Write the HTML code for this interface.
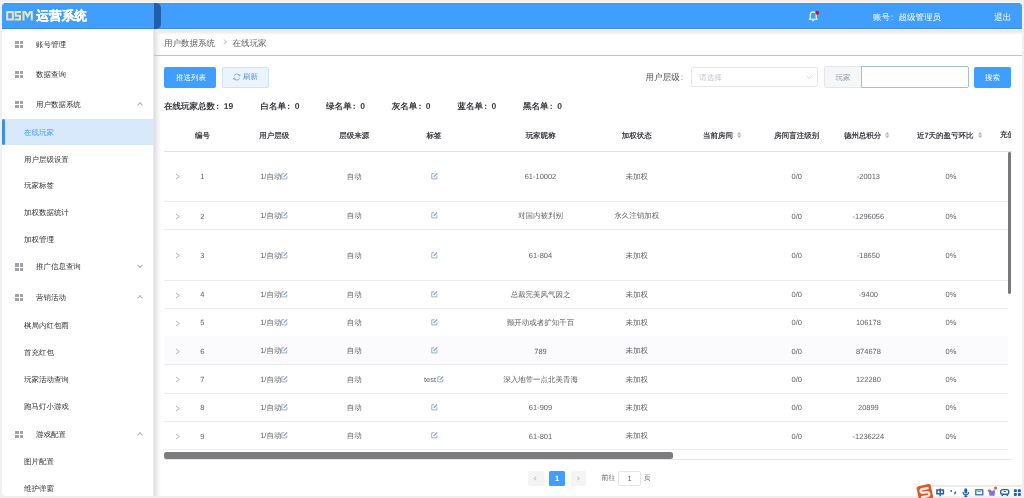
<!DOCTYPE html><html><head><meta charset="utf-8"><style>
*{margin:0;padding:0;box-sizing:border-box}
html,body{text-rendering:geometricPrecision;width:1024px;height:498px;overflow:hidden;background:#f0f0f2;font-family:"Liberation Sans",sans-serif;color:#606266}
div,span,svg{position:absolute}
#wrap{left:0;top:0;width:1024px;height:498px;will-change:transform}
.t{white-space:nowrap;line-height:10px}
.th{font-size:7.47px;font-weight:bold;color:#3c3d42}
.td{font-size:7.47px;color:#606266}
.ic{width:8px;height:8px}
.ic i{position:absolute;width:3.2px;height:3.2px;background:#a0a2a6}
.chev{width:4.2px;height:4.2px;border-left:0.9px solid #a8abb2;border-top:0.9px solid #a8abb2}
</style></head><body><div id="wrap">
<div style="left:2px;top:3px;width:1020px;height:493px;background:#fff;border-radius:4px"></div>
<div style="left:2px;top:3px;width:1020px;height:26px;background:#409eff;border-radius:4px 4px 0 0"></div>
<div style="left:154px;top:30px;width:868px;height:5px;background:linear-gradient(#e8e8ea,#ededef 40%,rgba(255,255,255,0))"></div>
<div style="left:0;top:1.6px;width:1024px;height:1.2px;background:#fbfdff"></div>
<div style="left:4px;top:3px;width:1016px;height:1px;background:#4a93e2"></div>
<div style="left:2px;top:27.8px;width:1020px;height:1.2px;background:#4189dc"></div>
<div style="left:154px;top:3px;width:7px;height:26px;background:#245ea6;border-radius:0 5px 5px 0"></div>
<svg style="left:5px;top:10px" width="29" height="12" viewBox="0 0 29 12">
<g fill="none" stroke="#e9e5b8" stroke-width="2">
<rect x="2.2" y="2.1" width="5.6" height="7.4"/>
<path d="M16 2.1H10.6V5.8H15V9.5H9.6"/>
<path d="M18.5 10.5V2.1H20.3L22.7 6.4L25.1 2.1H26.8V10.5"/>
</g></svg>
<div class="t" style="left:36.3px;top:9.4px;font-size:12.7px;line-height:14px;font-weight:bold;color:#fff;-webkit-text-stroke:0.2px #fff">运营系统</div>
<svg style="left:807px;top:8.5px" width="14" height="14" viewBox="0 0 14 14">
<path d="M2.2 10.3L3.2 9.3V6.4C3.2 4.4 4.4 2.9 6.2 2.9C8 2.9 9.2 4.4 9.2 6.4V9.3L10.2 10.3Z" fill="none" stroke="#fff" stroke-width="1.1" stroke-linejoin="round"/>
<path d="M5.2 11.6H7.2" stroke="#fff" stroke-width="1.2"/>
<circle cx="10.2" cy="3.7" r="2" fill="#d2121c"/></svg>
<div class="t" style="left:873px;top:11.5px;font-size:8.5px;color:#fff">账号<span style="position:static;margin:0 5.1px 0 1px">:</span>超级管理员</div>
<div class="t" style="left:994px;top:11.6px;font-size:8.8px;color:#fff">退出</div>
<div style="left:153px;top:29px;width:8px;height:467px;background:linear-gradient(to right,#efeff1,#dfdfe2 20%,#eeeef0 50%,rgba(255,255,255,0))"></div>
<div class="ic" style="left:15.4px;top:41.1px"><i style="left:0;top:0"></i><i style="left:4.2px;top:0"></i><i style="left:0;top:4.2px"></i><i style="left:4.2px;top:4.2px"></i></div>
<div class="t" style="left:36px;top:40px;font-size:7.47px;color:#303133">账号管理</div>
<div class="ic" style="left:15.4px;top:71.1px"><i style="left:0;top:0"></i><i style="left:4.2px;top:0"></i><i style="left:0;top:4.2px"></i><i style="left:4.2px;top:4.2px"></i></div>
<div class="t" style="left:36px;top:70px;font-size:7.47px;color:#303133">数据查询</div>
<div class="ic" style="left:15.4px;top:100.6px"><i style="left:0;top:0"></i><i style="left:4.2px;top:0"></i><i style="left:0;top:4.2px"></i><i style="left:4.2px;top:4.2px"></i></div>
<div class="t" style="left:36px;top:99.5px;font-size:7.47px;color:#303133">用户数据系统</div>
<div class="chev" style="left:137.6px;top:102.8px;transform:rotate(45deg)"></div>
<div style="left:2px;top:118.8px;width:152px;height:26.5px;background:#d9e9fc"></div>
<div style="left:2px;top:118.8px;width:3px;height:26.5px;background:#3d8eea;border-radius:1.5px"></div>
<div class="t" style="left:24px;top:127.80000000000001px;font-size:7.47px;color:#409eff">在线玩家</div>
<div class="t" style="left:24px;top:154.5px;font-size:7.47px;color:#303133">用户层级设置</div>
<div class="t" style="left:24px;top:181px;font-size:7.47px;color:#303133">玩家标签</div>
<div class="t" style="left:24px;top:207.9px;font-size:7.47px;color:#303133">加权数据统计</div>
<div class="t" style="left:24px;top:234.9px;font-size:7.47px;color:#303133">加权管理</div>
<div class="ic" style="left:15.4px;top:263.40000000000003px"><i style="left:0;top:0"></i><i style="left:4.2px;top:0"></i><i style="left:0;top:4.2px"></i><i style="left:4.2px;top:4.2px"></i></div>
<div class="t" style="left:36px;top:262.3px;font-size:7.47px;color:#303133">推广信息查询</div>
<div class="chev" style="left:137.5px;top:263.0px;transform:rotate(-135deg)"></div>
<div class="ic" style="left:15.4px;top:294.1px"><i style="left:0;top:0"></i><i style="left:4.2px;top:0"></i><i style="left:0;top:4.2px"></i><i style="left:4.2px;top:4.2px"></i></div>
<div class="t" style="left:36px;top:293px;font-size:7.47px;color:#303133">营销活动</div>
<div class="chev" style="left:137.6px;top:296.3px;transform:rotate(45deg)"></div>
<div class="t" style="left:24px;top:320.5px;font-size:7.47px;color:#303133">棋局内红包雨</div>
<div class="t" style="left:24px;top:347.5px;font-size:7.47px;color:#303133">首充红包</div>
<div class="t" style="left:24px;top:374.5px;font-size:7.47px;color:#303133">玩家活动查询</div>
<div class="t" style="left:24px;top:401.5px;font-size:7.47px;color:#303133">跑马灯小游戏</div>
<div class="ic" style="left:15.4px;top:430.6px"><i style="left:0;top:0"></i><i style="left:4.2px;top:0"></i><i style="left:0;top:4.2px"></i><i style="left:4.2px;top:4.2px"></i></div>
<div class="t" style="left:36px;top:429.5px;font-size:7.47px;color:#303133">游戏配置</div>
<div class="chev" style="left:137.6px;top:432.8px;transform:rotate(45deg)"></div>
<div class="t" style="left:24px;top:456.6px;font-size:7.47px;color:#303133">图片配置</div>
<div class="t" style="left:24px;top:483.6px;font-size:7.47px;color:#303133">维护弹窗</div>
<div class="t" style="left:164px;top:37.5px;font-size:8.53px;color:#606266">用户数据系统</div>
<div style="left:221.8px;top:40.4px;width:4.2px;height:4.2px;border-right:0.8px solid #c4c7ce;border-top:0.8px solid #c4c7ce;transform:rotate(45deg)"></div>
<div class="t" style="left:232.5px;top:37.5px;font-size:8.53px;color:#606266">在线玩家</div>
<div style="left:154px;top:55px;width:868px;height:0.9px;background:#bcc3cc"></div>
<div style="left:164px;top:67px;width:52.3px;height:20.7px;background:#409eff;border-radius:2px"></div>
<div class="t" style="left:176px;top:72.5px;font-size:7.47px;color:#fff">推送列表</div>
<div style="left:222px;top:67px;width:46.8px;height:20.7px;background:#ebf4fe;border:0.7px solid #d3e2f2;border-radius:2px"></div>
<svg style="left:232px;top:72px" width="10" height="10" viewBox="0 0 10 10"><path d="M7.6 3.6A3 3 0 0 0 2.2 3.9 M2 6.3A3 3 0 0 0 7.5 6.2" fill="none" stroke="#6b8fb8" stroke-width="0.75"/><path d="M7.9 2.2V3.9H6.3 M1.8 7.8V6.1H3.4" fill="none" stroke="#6b8fb8" stroke-width="0.7"/></svg>
<div class="t" style="left:243px;top:72.2px;font-size:7.47px;color:#4f91dc">刷新</div>
<div class="t" style="left:645.6px;top:71.8px;font-size:8.53px;color:#4a4c50">用户层级<span style="position:static;margin-left:1px">:</span></div>
<div style="left:690.5px;top:66.8px;width:127.8px;height:20.5px;background:#fff;border:0.7px solid #e8e8eb;border-radius:2px"></div>
<div class="t" style="left:699.3px;top:72.5px;font-size:7.47px;color:#c0c4cc">请选择</div>
<svg style="left:805.5px;top:75.2px" width="7" height="5" viewBox="0 0 7 5"><path d="M0.6 0.8L3.4 3.5L6.2 0.8" fill="none" stroke="#c4c6cc" stroke-width="0.7"/></svg>
<div style="left:824.2px;top:66.3px;width:40px;height:21.3px;background:#f5f6f9;border:0.7px solid #e6e6ea;border-radius:2px 0 0 2px"></div>
<div class="t" style="left:835.5px;top:72.5px;font-size:7.47px;color:#909399">玩家</div>
<div style="left:861px;top:66.3px;width:107.5px;height:21.3px;background:#fff;border:0.8px solid #a2bfd8;border-radius:0 2px 2px 0"></div>
<div style="left:974.2px;top:66.7px;width:36.7px;height:20.9px;background:#409eff;border-radius:2px"></div>
<div class="t" style="left:985px;top:72.5px;font-size:7.47px;color:#fff">搜索</div>
<div class="t" style="left:164px;top:100.6px;font-size:8.53px;font-weight:bold;color:#3a3b3f">在线玩家总数<span style="position:static;margin:0 4.6px 0 1.2px">:</span>19</div>
<div class="t" style="left:260.5px;top:100.6px;font-size:8.53px;font-weight:bold;color:#3a3b3f">白名单<span style="position:static;margin:0 4.6px 0 1.2px">:</span>0</div>
<div class="t" style="left:326.1px;top:100.6px;font-size:8.53px;font-weight:bold;color:#3a3b3f">绿名单<span style="position:static;margin:0 4.6px 0 1.2px">:</span>0</div>
<div class="t" style="left:391.7px;top:100.6px;font-size:8.53px;font-weight:bold;color:#3a3b3f">灰名单<span style="position:static;margin:0 4.6px 0 1.2px">:</span>0</div>
<div class="t" style="left:457.4px;top:100.6px;font-size:8.53px;font-weight:bold;color:#3a3b3f">蓝名单<span style="position:static;margin:0 4.6px 0 1.2px">:</span>0</div>
<div class="t" style="left:523px;top:100.6px;font-size:8.53px;font-weight:bold;color:#3a3b3f">黑名单<span style="position:static;margin:0 4.6px 0 1.2px">:</span>0</div>
<div class="t th" style="left:202.5px;top:130.5px;transform:translateX(-50%)">编号</div>
<div class="t th" style="left:274.2px;top:130.5px;transform:translateX(-50%)">用户层级</div>
<div class="t th" style="left:354.2px;top:130.5px;transform:translateX(-50%)">层级来源</div>
<div class="t th" style="left:434px;top:130.5px;transform:translateX(-50%)">标签</div>
<div class="t th" style="left:540.8px;top:130.5px;transform:translateX(-50%)">玩家昵称</div>
<div class="t th" style="left:636.7px;top:130.5px;transform:translateX(-50%)">加权状态</div>
<div class="t th" style="left:718px;top:130.5px;transform:translateX(-50%)">当前房间</div>
<div class="t th" style="left:796.7px;top:130.5px;transform:translateX(-50%)">房间盲注级别</div>
<div class="t th" style="left:862.6px;top:130.5px;transform:translateX(-50%)">德州总积分</div>
<div class="t th" style="left:945.2px;top:130.5px;transform:translateX(-50%)">近7天的盈亏环比</div>
<div style="left:999px;top:128px;width:12.3px;height:14px;overflow:hidden"><div class="t th" style="left:1px;top:2.2px">充值</div></div>
<svg style="left:737.3px;top:131.8px" width="4.4" height="6" viewBox="0 0 4.4 6"><path d="M2.2 0L4.4 2.6H0Z M2.2 6L4.4 3.4H0Z" fill="#b2b4b8"/></svg>
<svg style="left:885.4px;top:131.8px" width="4.4" height="6" viewBox="0 0 4.4 6"><path d="M2.2 0L4.4 2.6H0Z M2.2 6L4.4 3.4H0Z" fill="#b2b4b8"/></svg>
<svg style="left:977.6px;top:131.8px" width="4.4" height="6" viewBox="0 0 4.4 6"><path d="M2.2 0L4.4 2.6H0Z M2.2 6L4.4 3.4H0Z" fill="#b2b4b8"/></svg>
<div style="left:164px;top:150.6px;width:848px;height:0.9px;background:#e2e2e4"></div>
<div style="left:1012px;top:135px;width:10px;height:340px;background:#fff"></div>
<svg style="left:175.2px;top:173.29999999999998px" width="6" height="7" viewBox="0 0 6 7"><path d="M1 1L4.3 3.5L1 6" fill="none" stroke="#9a9da2" stroke-width="0.8"/></svg>
<div class="t td" style="left:202.4px;top:172.2px;transform:translateX(-50%)">1</div>
<div class="t td" style="left:260.2px;top:171.7px">1/自动</div>
<svg style="left:281.4px;top:172.5px" width="7" height="7" viewBox="0 0 7 7"><path d="M3.4 0.75H0.75V5.9H5.9V3.3" fill="none" stroke="#8fa8c8" stroke-width="0.9"/><path d="M2.7 3.9L6.2 0.5" stroke="#7d9dd2" stroke-width="1.1"/></svg>
<div class="t td" style="left:354.2px;top:171.7px;transform:translateX(-50%)">自动</div>
<svg style="left:430.5px;top:172.5px" width="7" height="7" viewBox="0 0 7 7"><path d="M3.4 0.75H0.75V5.9H5.9V3.3" fill="none" stroke="#8fa8c8" stroke-width="0.9"/><path d="M2.7 3.9L6.2 0.5" stroke="#7d9dd2" stroke-width="1.1"/></svg>
<div class="t td" style="left:540.5px;top:172.2px;transform:translateX(-50%)">61-10002</div>
<div class="t td" style="left:636.7px;top:171.7px;transform:translateX(-50%)">未加权</div>
<div class="t td" style="left:796.7px;top:172.2px;transform:translateX(-50%)">0/0</div>
<div class="t td" style="left:868.4px;top:172.2px;transform:translateX(-50%)">-20013</div>
<div class="t td" style="left:951px;top:172.2px;transform:translateX(-50%)">0%</div>
<div style="left:164px;top:201.2px;width:844px;height:0.8px;background:#ececee"></div>
<svg style="left:175.2px;top:213.0px" width="6" height="7" viewBox="0 0 6 7"><path d="M1 1L4.3 3.5L1 6" fill="none" stroke="#9a9da2" stroke-width="0.8"/></svg>
<div class="t td" style="left:202.4px;top:211.9px;transform:translateX(-50%)">2</div>
<div class="t td" style="left:260.2px;top:211.4px">1/自动</div>
<svg style="left:281.4px;top:212.20000000000002px" width="7" height="7" viewBox="0 0 7 7"><path d="M3.4 0.75H0.75V5.9H5.9V3.3" fill="none" stroke="#8fa8c8" stroke-width="0.9"/><path d="M2.7 3.9L6.2 0.5" stroke="#7d9dd2" stroke-width="1.1"/></svg>
<div class="t td" style="left:354.2px;top:211.4px;transform:translateX(-50%)">自动</div>
<svg style="left:430.5px;top:212.20000000000002px" width="7" height="7" viewBox="0 0 7 7"><path d="M3.4 0.75H0.75V5.9H5.9V3.3" fill="none" stroke="#8fa8c8" stroke-width="0.9"/><path d="M2.7 3.9L6.2 0.5" stroke="#7d9dd2" stroke-width="1.1"/></svg>
<div class="t td" style="left:540.5px;top:211.4px;transform:translateX(-50%)">对国内被判别</div>
<div class="t td" style="left:636.7px;top:211.4px;transform:translateX(-50%)">永久注销加权</div>
<div class="t td" style="left:796.7px;top:211.9px;transform:translateX(-50%)">0/0</div>
<div class="t td" style="left:868.4px;top:211.9px;transform:translateX(-50%)">-1296056</div>
<div class="t td" style="left:951px;top:211.9px;transform:translateX(-50%)">0%</div>
<div style="left:164px;top:229.4px;width:844px;height:0.8px;background:#ececee"></div>
<svg style="left:175.2px;top:252.4px" width="6" height="7" viewBox="0 0 6 7"><path d="M1 1L4.3 3.5L1 6" fill="none" stroke="#9a9da2" stroke-width="0.8"/></svg>
<div class="t td" style="left:202.4px;top:251.3px;transform:translateX(-50%)">3</div>
<div class="t td" style="left:260.2px;top:250.8px">1/自动</div>
<svg style="left:281.4px;top:251.60000000000002px" width="7" height="7" viewBox="0 0 7 7"><path d="M3.4 0.75H0.75V5.9H5.9V3.3" fill="none" stroke="#8fa8c8" stroke-width="0.9"/><path d="M2.7 3.9L6.2 0.5" stroke="#7d9dd2" stroke-width="1.1"/></svg>
<div class="t td" style="left:354.2px;top:250.8px;transform:translateX(-50%)">自动</div>
<svg style="left:430.5px;top:251.60000000000002px" width="7" height="7" viewBox="0 0 7 7"><path d="M3.4 0.75H0.75V5.9H5.9V3.3" fill="none" stroke="#8fa8c8" stroke-width="0.9"/><path d="M2.7 3.9L6.2 0.5" stroke="#7d9dd2" stroke-width="1.1"/></svg>
<div class="t td" style="left:540.5px;top:251.3px;transform:translateX(-50%)">61-804</div>
<div class="t td" style="left:636.7px;top:250.8px;transform:translateX(-50%)">未加权</div>
<div class="t td" style="left:796.7px;top:251.3px;transform:translateX(-50%)">0/0</div>
<div class="t td" style="left:868.4px;top:251.3px;transform:translateX(-50%)">-18650</div>
<div class="t td" style="left:951px;top:251.3px;transform:translateX(-50%)">0%</div>
<div style="left:164px;top:280.3px;width:844px;height:0.8px;background:#ececee"></div>
<svg style="left:175.2px;top:291.5px" width="6" height="7" viewBox="0 0 6 7"><path d="M1 1L4.3 3.5L1 6" fill="none" stroke="#9a9da2" stroke-width="0.8"/></svg>
<div class="t td" style="left:202.4px;top:290.4px;transform:translateX(-50%)">4</div>
<div class="t td" style="left:260.2px;top:289.9px">1/自动</div>
<svg style="left:281.4px;top:290.7px" width="7" height="7" viewBox="0 0 7 7"><path d="M3.4 0.75H0.75V5.9H5.9V3.3" fill="none" stroke="#8fa8c8" stroke-width="0.9"/><path d="M2.7 3.9L6.2 0.5" stroke="#7d9dd2" stroke-width="1.1"/></svg>
<div class="t td" style="left:354.2px;top:289.9px;transform:translateX(-50%)">自动</div>
<svg style="left:430.5px;top:290.7px" width="7" height="7" viewBox="0 0 7 7"><path d="M3.4 0.75H0.75V5.9H5.9V3.3" fill="none" stroke="#8fa8c8" stroke-width="0.9"/><path d="M2.7 3.9L6.2 0.5" stroke="#7d9dd2" stroke-width="1.1"/></svg>
<div class="t td" style="left:540.5px;top:289.9px;transform:translateX(-50%)">总裁完美风气因之</div>
<div class="t td" style="left:636.7px;top:289.9px;transform:translateX(-50%)">未加权</div>
<div class="t td" style="left:796.7px;top:290.4px;transform:translateX(-50%)">0/0</div>
<div class="t td" style="left:868.4px;top:290.4px;transform:translateX(-50%)">-9400</div>
<div class="t td" style="left:951px;top:290.4px;transform:translateX(-50%)">0%</div>
<div style="left:164px;top:308.0px;width:844px;height:0.8px;background:#ececee"></div>
<svg style="left:175.2px;top:319.5px" width="6" height="7" viewBox="0 0 6 7"><path d="M1 1L4.3 3.5L1 6" fill="none" stroke="#9a9da2" stroke-width="0.8"/></svg>
<div class="t td" style="left:202.4px;top:318.4px;transform:translateX(-50%)">5</div>
<div class="t td" style="left:260.2px;top:317.9px">1/自动</div>
<svg style="left:281.4px;top:318.7px" width="7" height="7" viewBox="0 0 7 7"><path d="M3.4 0.75H0.75V5.9H5.9V3.3" fill="none" stroke="#8fa8c8" stroke-width="0.9"/><path d="M2.7 3.9L6.2 0.5" stroke="#7d9dd2" stroke-width="1.1"/></svg>
<div class="t td" style="left:354.2px;top:317.9px;transform:translateX(-50%)">自动</div>
<svg style="left:430.5px;top:318.7px" width="7" height="7" viewBox="0 0 7 7"><path d="M3.4 0.75H0.75V5.9H5.9V3.3" fill="none" stroke="#8fa8c8" stroke-width="0.9"/><path d="M2.7 3.9L6.2 0.5" stroke="#7d9dd2" stroke-width="1.1"/></svg>
<div class="t td" style="left:540.5px;top:317.9px;transform:translateX(-50%)">颤开动或者扩知千百</div>
<div class="t td" style="left:636.7px;top:317.9px;transform:translateX(-50%)">未加权</div>
<div class="t td" style="left:796.7px;top:318.4px;transform:translateX(-50%)">0/0</div>
<div class="t td" style="left:868.4px;top:318.4px;transform:translateX(-50%)">106178</div>
<div class="t td" style="left:951px;top:318.4px;transform:translateX(-50%)">0%</div>
<div style="left:164px;top:336.0px;width:844px;height:0.8px;background:#ececee"></div>
<div style="left:164px;top:336.4px;width:844px;height:28.200000000000045px;background:#fbfafd"></div>
<svg style="left:175.2px;top:347.70000000000005px" width="6" height="7" viewBox="0 0 6 7"><path d="M1 1L4.3 3.5L1 6" fill="none" stroke="#9a9da2" stroke-width="0.8"/></svg>
<div class="t td" style="left:202.4px;top:346.6px;transform:translateX(-50%)">6</div>
<div class="t td" style="left:260.2px;top:346.1px">1/自动</div>
<svg style="left:281.4px;top:346.90000000000003px" width="7" height="7" viewBox="0 0 7 7"><path d="M3.4 0.75H0.75V5.9H5.9V3.3" fill="none" stroke="#8fa8c8" stroke-width="0.9"/><path d="M2.7 3.9L6.2 0.5" stroke="#7d9dd2" stroke-width="1.1"/></svg>
<div class="t td" style="left:354.2px;top:346.1px;transform:translateX(-50%)">自动</div>
<svg style="left:430.5px;top:346.90000000000003px" width="7" height="7" viewBox="0 0 7 7"><path d="M3.4 0.75H0.75V5.9H5.9V3.3" fill="none" stroke="#8fa8c8" stroke-width="0.9"/><path d="M2.7 3.9L6.2 0.5" stroke="#7d9dd2" stroke-width="1.1"/></svg>
<div class="t td" style="left:540.5px;top:346.6px;transform:translateX(-50%)">789</div>
<div class="t td" style="left:636.7px;top:346.1px;transform:translateX(-50%)">未加权</div>
<div class="t td" style="left:796.7px;top:346.6px;transform:translateX(-50%)">0/0</div>
<div class="t td" style="left:868.4px;top:346.6px;transform:translateX(-50%)">874678</div>
<div class="t td" style="left:951px;top:346.6px;transform:translateX(-50%)">0%</div>
<div style="left:164px;top:364.20000000000005px;width:844px;height:0.8px;background:#ececee"></div>
<svg style="left:175.2px;top:376.3px" width="6" height="7" viewBox="0 0 6 7"><path d="M1 1L4.3 3.5L1 6" fill="none" stroke="#9a9da2" stroke-width="0.8"/></svg>
<div class="t td" style="left:202.4px;top:375.2px;transform:translateX(-50%)">7</div>
<div class="t td" style="left:260.2px;top:374.7px">1/自动</div>
<svg style="left:281.4px;top:375.5px" width="7" height="7" viewBox="0 0 7 7"><path d="M3.4 0.75H0.75V5.9H5.9V3.3" fill="none" stroke="#8fa8c8" stroke-width="0.9"/><path d="M2.7 3.9L6.2 0.5" stroke="#7d9dd2" stroke-width="1.1"/></svg>
<div class="t td" style="left:354.2px;top:374.7px;transform:translateX(-50%)">自动</div>
<div class="t td" style="left:424px;top:374.7px">test</div>
<svg style="left:436.9px;top:375.5px" width="7" height="7" viewBox="0 0 7 7"><path d="M3.4 0.75H0.75V5.9H5.9V3.3" fill="none" stroke="#8fa8c8" stroke-width="0.9"/><path d="M2.7 3.9L6.2 0.5" stroke="#7d9dd2" stroke-width="1.1"/></svg>
<div class="t td" style="left:540.5px;top:374.7px;transform:translateX(-50%)">深入地带一点北美青海</div>
<div class="t td" style="left:636.7px;top:374.7px;transform:translateX(-50%)">未加权</div>
<div class="t td" style="left:796.7px;top:375.2px;transform:translateX(-50%)">0/0</div>
<div class="t td" style="left:868.4px;top:375.2px;transform:translateX(-50%)">122280</div>
<div class="t td" style="left:951px;top:375.2px;transform:translateX(-50%)">0%</div>
<div style="left:164px;top:392.8px;width:844px;height:0.8px;background:#ececee"></div>
<svg style="left:175.2px;top:404.5px" width="6" height="7" viewBox="0 0 6 7"><path d="M1 1L4.3 3.5L1 6" fill="none" stroke="#9a9da2" stroke-width="0.8"/></svg>
<div class="t td" style="left:202.4px;top:403.4px;transform:translateX(-50%)">8</div>
<div class="t td" style="left:260.2px;top:402.9px">1/自动</div>
<svg style="left:281.4px;top:403.7px" width="7" height="7" viewBox="0 0 7 7"><path d="M3.4 0.75H0.75V5.9H5.9V3.3" fill="none" stroke="#8fa8c8" stroke-width="0.9"/><path d="M2.7 3.9L6.2 0.5" stroke="#7d9dd2" stroke-width="1.1"/></svg>
<div class="t td" style="left:354.2px;top:402.9px;transform:translateX(-50%)">自动</div>
<svg style="left:430.5px;top:403.7px" width="7" height="7" viewBox="0 0 7 7"><path d="M3.4 0.75H0.75V5.9H5.9V3.3" fill="none" stroke="#8fa8c8" stroke-width="0.9"/><path d="M2.7 3.9L6.2 0.5" stroke="#7d9dd2" stroke-width="1.1"/></svg>
<div class="t td" style="left:540.5px;top:403.4px;transform:translateX(-50%)">61-909</div>
<div class="t td" style="left:636.7px;top:402.9px;transform:translateX(-50%)">未加权</div>
<div class="t td" style="left:796.7px;top:403.4px;transform:translateX(-50%)">0/0</div>
<div class="t td" style="left:868.4px;top:403.4px;transform:translateX(-50%)">20899</div>
<div class="t td" style="left:951px;top:403.4px;transform:translateX(-50%)">0%</div>
<div style="left:164px;top:421.0px;width:844px;height:0.8px;background:#ececee"></div>
<svg style="left:175.2px;top:432.6px" width="6" height="7" viewBox="0 0 6 7"><path d="M1 1L4.3 3.5L1 6" fill="none" stroke="#9a9da2" stroke-width="0.8"/></svg>
<div class="t td" style="left:202.4px;top:431.5px;transform:translateX(-50%)">9</div>
<div class="t td" style="left:260.2px;top:431.0px">1/自动</div>
<svg style="left:281.4px;top:431.8px" width="7" height="7" viewBox="0 0 7 7"><path d="M3.4 0.75H0.75V5.9H5.9V3.3" fill="none" stroke="#8fa8c8" stroke-width="0.9"/><path d="M2.7 3.9L6.2 0.5" stroke="#7d9dd2" stroke-width="1.1"/></svg>
<div class="t td" style="left:354.2px;top:431.0px;transform:translateX(-50%)">自动</div>
<svg style="left:430.5px;top:431.8px" width="7" height="7" viewBox="0 0 7 7"><path d="M3.4 0.75H0.75V5.9H5.9V3.3" fill="none" stroke="#8fa8c8" stroke-width="0.9"/><path d="M2.7 3.9L6.2 0.5" stroke="#7d9dd2" stroke-width="1.1"/></svg>
<div class="t td" style="left:540.5px;top:431.5px;transform:translateX(-50%)">61-801</div>
<div class="t td" style="left:636.7px;top:431.0px;transform:translateX(-50%)">未加权</div>
<div class="t td" style="left:796.7px;top:431.5px;transform:translateX(-50%)">0/0</div>
<div class="t td" style="left:868.4px;top:431.5px;transform:translateX(-50%)">-1236224</div>
<div class="t td" style="left:951px;top:431.5px;transform:translateX(-50%)">0%</div>
<div style="left:164px;top:448.90000000000003px;width:844px;height:0.8px;background:#ececee"></div>
<div style="left:1008.2px;top:152.4px;width:2.8px;height:142px;background:#79797b;border-radius:1.4px"></div>
<div style="left:164px;top:452px;width:509px;height:7.2px;background:#7d7d7f;border-radius:2.5px"></div>
<div style="left:164px;top:459.2px;width:847px;height:0.8px;background:#e4e4e6"></div>
<div style="left:528px;top:471px;width:15.5px;height:15px;background:#f4f4f5;border-radius:1.5px"></div>
<div style="left:534px;top:477px;width:3.4px;height:3.4px;border-left:0.8px solid #c0c4cc;border-bottom:0.8px solid #c0c4cc;transform:rotate(45deg)"></div>
<div style="left:549px;top:471px;width:16px;height:15px;background:#409eff;border-radius:1.5px"></div>
<div class="t" style="left:557px;top:473.5px;font-size:7.47px;font-weight:bold;color:#fff;transform:translateX(-50%)">1</div>
<div style="left:570.7px;top:471px;width:15.3px;height:15px;background:#f4f4f5;border-radius:1.5px"></div>
<div style="left:576.3px;top:477px;width:3.4px;height:3.4px;border-right:0.8px solid #c0c4cc;border-top:0.8px solid #c0c4cc;transform:rotate(45deg)"></div>
<div class="t" style="left:601.4px;top:473.7px;font-size:7px;color:#606266">前往</div>
<div style="left:617.8px;top:471px;width:23.2px;height:15px;background:#fff;border:0.7px solid #e4e7ed;border-radius:2px"></div>
<div class="t" style="left:629.5px;top:473.5px;font-size:7.47px;color:#606266;transform:translateX(-50%)">1</div>
<div class="t" style="left:643.7px;top:473.7px;font-size:7px;color:#606266">页</div>
<div style="left:0;top:496.6px;width:1024px;height:1.4px;background:#ebebed"></div>
<div style="left:928px;top:485px;width:94px;height:1.6px;background:#ebebed"></div>
<svg style="left:912px;top:478px" width="112" height="20" viewBox="0 0 112 20">
<g transform="rotate(-12 12.5 14)"><rect x="5.5" y="7" width="14.5" height="15" rx="2.2" fill="#dc5a2a"/>
<path d="M17.3 10.8H10.6C8.2 10.8 8.2 14.3 10.6 14.4L14.9 14.7C17.4 14.9 17.3 18.7 14.7 18.7H8" fill="none" stroke="#fbeee6" stroke-width="2.4"/></g>
<g fill="none" stroke="#2462b0" stroke-width="1.5">
<rect x="24.9" y="12" width="6.5" height="3.8"/><path d="M28.2 10.6V18.2"/>
</g>
<circle cx="39.2" cy="13" r="0.9" fill="#2462b0"/><path d="M43.6 13.6L42.6 16.3" stroke="#2462b0" stroke-width="1.4"/>
<rect x="52.3" y="10.3" width="3" height="5.2" rx="1.5" fill="#2462b0"/>
<path d="M51 14A2.8 2.8 0 0 0 56.6 14 M53.8 16.8V18.2 M52.3 18.4H55.3" fill="none" stroke="#2462b0" stroke-width="1.1"/>
<rect x="63.8" y="11.8" width="7" height="5" fill="none" stroke="#2462b0" stroke-width="1.2"/><path d="M65.3 13.4H69.3" stroke="#5d93d8" stroke-width="0.9"/>
<path d="M76 12.4L78.3 11.6L80 13.3L82.3 11.5L83 13.5L82.5 17.8H77.5L77 14.5Z" fill="#8c6fd8"/><circle cx="77" cy="12.6" r="1.2" fill="#d05a6a"/><circle cx="83.6" cy="10" r="1.6" fill="#e06548"/>
<rect x="88.7" y="11.6" width="8" height="4.6" rx="1.8" fill="none" stroke="#2462b0" stroke-width="1.4"/><path d="M89.5 17.4H91 M94.5 17.4H96" stroke="#2462b0" stroke-width="1.3"/><path d="M91.5 13.5H94" stroke="#2462b0" stroke-width="0.9"/>
<g fill="#1e5fb4"><rect x="101.8" y="11.3" width="3.1" height="3" rx="0.8"/><rect x="105.8" y="11.3" width="3.1" height="3" rx="0.8"/><rect x="101.8" y="14.9" width="3.1" height="3" rx="0.8"/><rect x="105.8" y="14.9" width="3.1" height="3" rx="0.8"/></g>
</svg>
</div></body></html>
